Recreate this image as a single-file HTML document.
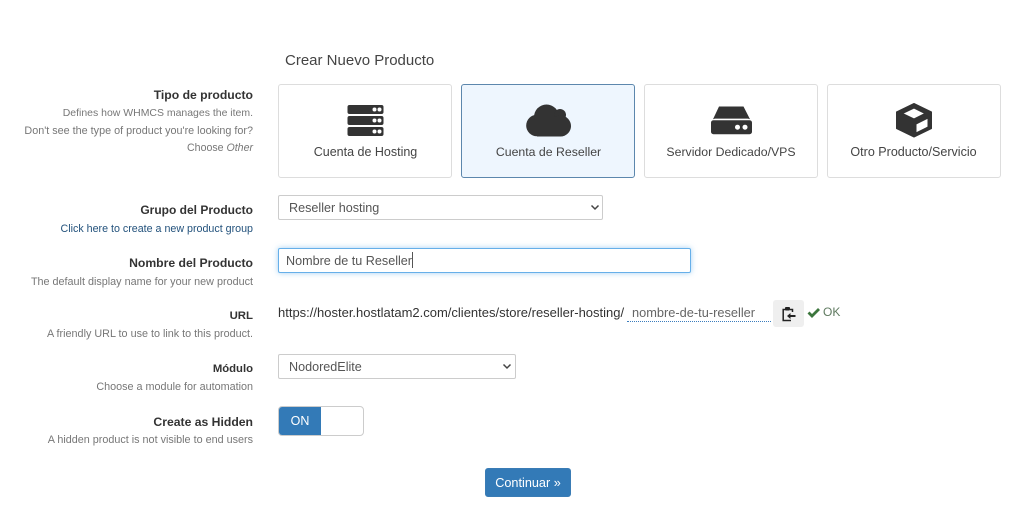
<!DOCTYPE html>
<html>
<head>
<meta charset="utf-8">
<style>
html,body{margin:0;padding:0;background:#fff;width:1024px;height:518px;overflow:hidden}
body{position:relative;font-family:"Liberation Sans",sans-serif;color:#333}
.a{position:absolute;white-space:nowrap}
.l{position:absolute;right:771px;white-space:nowrap;text-align:right}
.b{font-weight:bold;font-size:12.2px;color:#333;line-height:16px}
.s{font-size:10.8px;color:#777;line-height:16px;margin-top:1px}
.card{position:absolute;top:84px;width:172px;height:92px;border:1px solid #ddd;border-radius:3px;background:#fff}
.card.on{background:#eef6fe;border-color:#5c87ad}
.cap{position:absolute;top:144px;width:174px;text-align:center;font-size:12.3px;color:#444;line-height:16px;white-space:nowrap}
.sel{position:absolute;border:1px solid #ccc;border-radius:2px;background:#fff;box-sizing:border-box;height:25px;font-size:12.6px;color:#555;line-height:25px;padding-left:10px}
svg{position:absolute;overflow:visible}
</style>
</head>
<body>
<div class="a" style="left:285px;top:52px;font-size:15px;color:#444;line-height:18px">Crear Nuevo Producto</div>

<div class="l b" style="top:87px">Tipo de producto</div>
<div class="l s" style="top:105px;font-size:10.47px">Defines how WHMCS manages the item.</div>
<div class="l s" style="top:122px">Don't see the type of product you're looking for?</div>
<div class="l s" style="top:139px;font-size:10.6px">Choose <i>Other</i></div>

<div class="card" style="left:278px"></div>
<div class="card on" style="left:461px"></div>
<div class="card" style="left:644px"></div>
<div class="card" style="left:827px"></div>

<svg style="left:0;top:0" width="1024" height="518" viewBox="0 0 1024 518">
  <g fill="#333">
    <rect x="347.500" y="105" width="36" height="9" rx="2"/>
    <rect x="347.500" y="116" width="36" height="9" rx="2"/>
    <rect x="347.500" y="127" width="36" height="9" rx="2"/>
    <circle cx="537" cy="125.500" r="10.800"/>
    <circle cx="546.500" cy="117" r="12.500"/>
    <circle cx="560" cy="115" r="6"/>
    <circle cx="560.500" cy="126" r="10.500"/>
    <rect x="537" y="120" width="24" height="16.500"/>
    <path d="M719 106.500H743.500L750 119.300C749 118.800 748 118.600 747 118.600H716C715 118.600 714 118.800 713 119.300Z"/>
    <rect x="711" y="120.200" width="41" height="14" rx="2.500"/>
    <path fill-rule="evenodd" stroke="#333" stroke-width="1" stroke-linejoin="round" d="M914 103.500L931.500 112V128.500L914 137L896.500 128.500V112ZM914 108L902.500 113.500L914 119L925 113.500ZM916 124V133L928 127V118Z"/>
  </g>
  <g fill="#fff">
    <circle cx="374.500" cy="109.500" r="2"/><circle cx="379.500" cy="109.500" r="2"/>
    <circle cx="374.500" cy="120.500" r="2"/><circle cx="379.500" cy="120.500" r="2"/>
    <circle cx="374.500" cy="131.500" r="2"/><circle cx="379.500" cy="131.500" r="2"/>
    <circle cx="737.500" cy="127.200" r="2.500"/><circle cx="745" cy="127.200" r="2.500"/>
  </g>
</svg>

<div class="cap" style="left:278.500px;font-size:12.5px">Cuenta de Hosting</div>
<div class="cap" style="left:461.500px">Cuenta de Reseller</div>
<div class="cap" style="left:644px">Servidor Dedicado/VPS</div>
<div class="cap" style="left:826.500px;font-size:12.55px">Otro Producto/Servicio</div>

<div class="l b" style="top:202px;font-size:12px">Grupo del Producto</div>
<div class="l s" style="top:220px;color:#23527c;font-size:10.7px">Click here to create a new product group</div>
<div class="sel" style="left:278px;top:195px;width:325px">Reseller hosting</div>
<svg style="left:590px;top:204px" width="10" height="7" viewBox="0 0 10 7"><path d="M1.500 1.500L5 5L8.500 1.500" fill="none" stroke="#444" stroke-width="1.500"/></svg>

<div class="l b" style="top:255px">Nombre del Producto</div>
<div class="l s" style="top:273px">The default display name for your new product</div>
<div class="a" style="left:278px;top:248px;width:413px;height:25px;box-sizing:border-box;border:1px solid #66afe9;border-radius:2px;box-shadow:0 0 6px rgba(102,175,233,.6);background:#fff;font-size:12.6px;color:#555;line-height:24px;padding-left:7px">Nombre de tu Reseller<span style="display:inline-block;width:1px;height:16px;background:#555;vertical-align:-3px"></span></div>

<div class="l b" style="top:308px;font-size:11.4px">URL</div>
<div class="l s" style="top:325px">A friendly URL to use to link to this product.</div>
<div class="a" style="left:278px;top:305px;font-size:13px;color:#333;line-height:16px">https://hoster.hostlatam2.com/clientes/store/reseller-hosting/</div>
<div class="a" style="left:627px;top:305px;width:144px;height:17px;box-sizing:border-box;border-bottom:1px dotted #3b7dbd;font-size:12.8px;color:#666;line-height:15px;padding-left:5px">nombre-de-tu-reseller</div>
<div class="a" style="left:773px;top:300px;width:31px;height:27px;background:#efefef;border-radius:3px"></div>
<svg style="left:0;top:0" width="1024" height="518" viewBox="0 0 1024 518">
  <path d="M792.500 312V309.500H790M785.500 309.500H783.200V320.500H791" fill="none" stroke="#222" stroke-width="1.500"/>
  <rect x="785" y="307" width="5" height="3.500" rx="1" fill="#222"/>
  <path d="M787 316L790.500 313V315H795.500V317H790.500V319Z" fill="#222"/>
  <path d="M808.500 312.500L812 316L819 309" fill="none" stroke="#3c763d" stroke-width="2.800"/>
</svg>
<div class="a" style="left:823px;top:304px;font-size:12px;color:#5f7a60;line-height:16px">OK</div>

<div class="l b" style="top:361px;font-size:11.3px">Módulo</div>
<div class="l s" style="top:378px">Choose a module for automation</div>
<div class="sel" style="left:278px;top:354px;width:238px">NodoredElite</div>
<svg style="left:502px;top:363px" width="10" height="7" viewBox="0 0 10 7"><path d="M1.500 1.500L5 5L8.500 1.500" fill="none" stroke="#444" stroke-width="1.500"/></svg>

<div class="l b" style="top:414px">Create as Hidden</div>
<div class="l s" style="top:431px">A hidden product is not visible to end users</div>
<div class="a" style="left:278px;top:406px;width:86px;height:30px;box-sizing:border-box;border:1px solid #ccc;border-radius:4px;background:#fff"></div>
<div class="a" style="left:279px;top:407px;width:42px;height:28px;background:#337ab7;border-radius:3px 0 0 3px;color:#fff;font-size:12.5px;line-height:29px;text-align:center">ON</div>

<div class="a" style="left:485px;top:468px;width:86px;height:29px;background:#337ab7;border:1px solid #3a7cb5;box-sizing:border-box;border-radius:3px;color:#fff;font-size:12.7px;line-height:29px;text-align:center">Continuar »</div>
</body>
</html>
